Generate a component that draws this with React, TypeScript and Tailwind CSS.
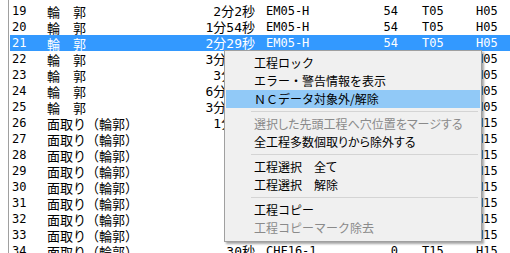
import React from "react";

type Row = {
  no: number;
  name: string;
  time: string;
  code: string;
  count: string;
  tool: string;
  hole: string;
};

const RIN = "輪　郭";
const MEN = "面取り（輪郭）";

const rows: Row[] = [
  { no: 19, name: RIN, time: "2分2秒", code: "EM05-H", count: "54", tool: "T05", hole: "H05" },
  { no: 20, name: RIN, time: "1分54秒", code: "EM05-H", count: "54", tool: "T05", hole: "H05" },
  { no: 21, name: RIN, time: "2分29秒", code: "EM05-H", count: "54", tool: "T05", hole: "H05" },
  { no: 22, name: RIN, time: "3分10秒", code: "EM05-H", count: "54", tool: "T05", hole: "H05" },
  { no: 23, name: RIN, time: "3分8秒", code: "EM05-H", count: "54", tool: "T05", hole: "H05" },
  { no: 24, name: RIN, time: "6分41秒", code: "EM05-H", count: "54", tool: "T05", hole: "H05" },
  { no: 25, name: RIN, time: "3分15秒", code: "EM05-H", count: "54", tool: "T05", hole: "H05" },
  { no: 26, name: MEN, time: "1分2秒", code: "CHF16-1", count: "0", tool: "T15", hole: "H15" },
  { no: 27, name: MEN, time: "41秒", code: "CHF16-1", count: "0", tool: "T15", hole: "H15" },
  { no: 28, name: MEN, time: "38秒", code: "CHF16-1", count: "0", tool: "T15", hole: "H15" },
  { no: 29, name: MEN, time: "52秒", code: "CHF16-1", count: "0", tool: "T15", hole: "H15" },
  { no: 30, name: MEN, time: "36秒", code: "CHF16-1", count: "0", tool: "T15", hole: "H15" },
  { no: 31, name: MEN, time: "33秒", code: "CHF16-1", count: "0", tool: "T15", hole: "H15" },
  { no: 32, name: MEN, time: "45秒", code: "CHF16-1", count: "0", tool: "T15", hole: "H15" },
  { no: 33, name: MEN, time: "39秒", code: "CHF16-1", count: "0", tool: "T15", hole: "H15" },
  { no: 34, name: MEN, time: "30秒", code: "CHF16-1", count: "0", tool: "T15", hole: "H15" },
];

type MenuEntry =
  | { sep: true }
  | { sep?: false; label: string; disabled?: boolean; active?: boolean; wide?: boolean };

// wide = keep full-width spacing (no palt), as in the reference
const menu: MenuEntry[] = [
  { label: "工程ロック", wide: true },
  { label: "エラー・警告情報を表示", wide: true },
  { label: "ＮＣデータ対象外/解除", active: true, wide: true },
  { sep: true },
  { label: "選択した先頭工程へ穴位置をマージする", disabled: true },
  { label: "全工程多数個取りから除外する" },
  { sep: true },
  { label: "工程選択　全て" },
  { label: "工程選択　解除" },
  { sep: true },
  { label: "工程コピー", wide: true },
  { label: "工程コピーマーク除去", disabled: true, wide: true },
];

const mono = "font-['DejaVu_Sans_Mono','Noto_Sans_CJK_JP',monospace] text-[12px]";
const jp = "font-['DejaVu_Sans_Mono','Noto_Sans_CJK_JP',sans-serif] text-[13px]";

const ContextMenu = () => {
  return (
    <div className="absolute left-[224px] top-[50px] w-[258px] border border-[#a0a0a0] bg-[#f0f0f0] px-[1px] pt-[3px] pb-[4px] shadow-[2px_2px_2px_rgba(0,0,0,0.35)] font-['Noto_Sans_CJK_JP',sans-serif] text-[12px]">
      {menu.map((m, i) =>
        m.sep ? (
          <div key={i} className="flex h-[7px] items-center pl-[25px] pr-[2px]">
            <div className="h-px w-full bg-[#d4d4d4]" />
          </div>
        ) : (
          <div
            key={i}
            className={
              "flex h-[18px] items-center pl-[28px] leading-none " +
              (m.wide ? "" : "[font-feature-settings:'palt'] ") +
              (m.active ? "bg-[#91c9f7] " : "") +
              (m.disabled ? "text-[#8a8a8a]" : "text-black")
            }
          >
            {m.label}
          </div>
        )
      )}
    </div>
  );
};

const App = () => {
  return (
    <div className="relative h-[253px] w-[510px] overflow-hidden bg-white">
      <div className="ml-[8px] h-full border-l border-[#a0a0a0] pl-[1px] pt-[3px]">
        {rows.map((r) => {
          const sel = r.no === 21;
          return (
            <div
              key={r.no}
              className={
                "flex h-[16px] items-center whitespace-nowrap leading-none " +
                (sel ? "bg-[#3399ff] text-white" : "text-black")
              }
            >
              <div className={"w-[37px] pl-[2px] " + mono}>{r.no}</div>
              <div className="w-[148px] font-['Noto_Sans_CJK_JP',sans-serif] text-[13px]">{r.name}</div>
              <div className={"w-[60px] text-right " + jp}>{r.time}</div>
              <div className={"w-[106px] pl-[11px] " + mono}>{r.code}</div>
              <div className={"w-[37px] text-right " + mono}>{r.count}</div>
              <div className={"w-[78px] pl-[24px] " + mono}>{r.tool}</div>
              <div className={"flex-1 " + mono}>{r.hole}</div>
            </div>
          );
        })}
      </div>
      <ContextMenu />
    </div>
  );
};

export default App;
